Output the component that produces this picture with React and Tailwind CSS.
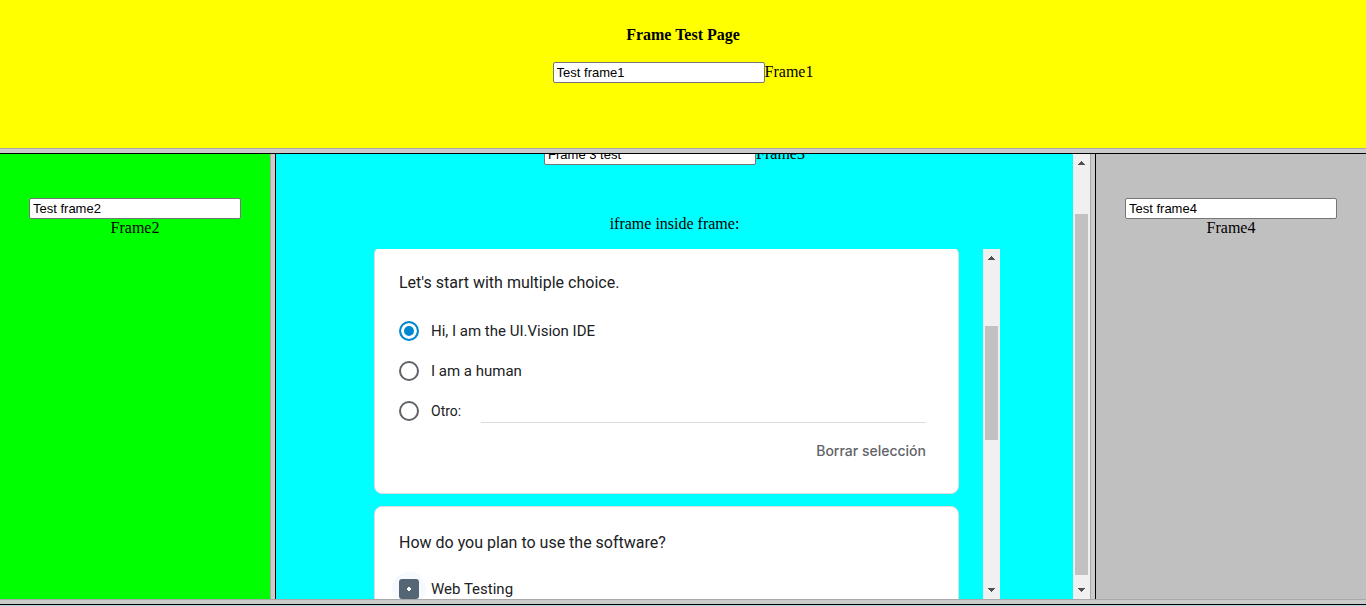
import React from "react";

function Arrow({ down }) {
  return (
    <svg width="7" height="4" viewBox="0 0 7 4" fill="#505050" shapeRendering="crispEdges" aria-hidden="true">
      <path d={down ? "M0 0h7v1H6v1H5v1H4v1H3V3H2V2H1V1H0z" : "M3 0h1v1h1v1h1v1h1v1H0V3h1V2h1V1h1z"} />
    </svg>
  );
}

function ScrollBar({ before, thumb, after }) {
  return (
    <div className="flex w-[17px] shrink-0 flex-col bg-[#f0f0f0]">
      <button type="button" aria-label="Scroll up" className="flex h-[17px] shrink-0 items-center justify-center pt-px">
        <Arrow />
      </button>
      <div className={before} />
      <div className={`mx-0.5 w-[13px] bg-[#c1c1c1] ${thumb}`} />
      <div className={after} />
      <button type="button" aria-label="Scroll down" className="flex h-[17px] shrink-0 items-center justify-center pb-px">
        <Arrow down />
      </button>
    </div>
  );
}

function HorizontalSplitter() {
  return <div className="h-[6px] shrink-0 border-t border-b border-t-[#a9a9a9] border-b-black bg-[#cbcbcb]" />;
}

function VerticalSplitter() {
  return <div className="w-[6px] shrink-0 border-r border-l border-l-[#a9a9a9] border-r-black bg-[#cbcbcb]" />;
}

function FrameField({ id, label, value, stacked }) {
  return (
    <div className={stacked ? "flex flex-col items-center leading-[18px]" : "flex items-start justify-center leading-5"}>
      <input
        id={id}
        type="text"
        defaultValue={value}
        className="h-[21px] w-[212px] rounded-[2px] border border-[#767676] bg-white px-[3px] font-['Liberation_Sans',Arial,sans-serif] text-[13px] leading-4 text-black"
      />
      <label htmlFor={id}>{label}</label>
    </div>
  );
}

function Card({ children }) {
  return <section className="shrink-0 rounded-lg border border-[#dadce0] bg-white pt-6 pr-8 pb-8 pl-6">{children}</section>;
}

const radio =
  "size-5 shrink-0 appearance-none rounded-full border-2 border-[#5f6368] checked:border-[#0288d1] checked:bg-[#0288d1] checked:shadow-[inset_0_0_0_3px_white]";

function Option({ id, label, checked }) {
  return (
    <div className="flex h-10 items-center gap-3">
      <input id={id} type="radio" name="choice" defaultChecked={checked} className={radio} />
      <label htmlFor={id}>{label}</label>
    </div>
  );
}

function EmbeddedForm() {
  return (
    <form className="flex min-h-0 min-w-0 flex-1 flex-col gap-3 overflow-hidden pr-6 pl-[25px] font-[Roboto,sans-serif] text-[15px] leading-5 text-[#202124]">
      <div className="-mt-[3px] shrink-0">
        <Card>
          <h2 className="text-base leading-6">Let's start with multiple choice.</h2>
          <div className="mt-4">
            <Option id="ide" label="Hi, I am the UI.Vision IDE" checked />
            <Option id="human" label="I am a human" />
            <div className="flex h-10 items-center gap-3">
              <input id="other" type="radio" name="choice" className={radio} />
              <label htmlFor="other" className="text-sm">Otro:</label>
              <input
                type="text"
                aria-label="Otro"
                className="ml-2 h-6 min-w-0 flex-1 border-b border-[#dadce0] outline-none"
              />
            </div>
          </div>
          <div className="mt-[10px] flex justify-end">
            <button type="button" className="font-[Inter,sans-serif] text-sm leading-5 font-medium text-[#5f6368]">
              Borrar selección
            </button>
          </div>
        </Card>
      </div>
      <Card>
        <h2 className="text-base leading-6">How do you plan to use the software?</h2>
        <div className="mt-[14px] flex h-10 items-center gap-[5px]">
          <span className="-ml-[7px] flex size-[34px] items-center justify-center rounded-full bg-[#f6faff]">
            <input
              id="web-testing"
              type="checkbox"
              defaultChecked
              className="size-5 appearance-none rounded-[3px] bg-[radial-gradient(circle,white_2px,#546573_2px)]"
            />
          </span>
          <label htmlFor="web-testing">Web Testing</label>
        </div>
      </Card>
    </form>
  );
}

export default function App() {
  return (
    <div className="flex h-screen flex-col overflow-hidden bg-[#add8e6] font-['Liberation_Serif','Times_New_Roman',serif] text-base text-black">
      <header className="h-[148px] shrink-0 bg-[#ffff00] pt-[25px]">
        <h1 className="mb-[17px] text-center leading-5 font-bold">Frame Test Page</h1>
        <FrameField id="frame1" label="Frame1" value="Test frame1" />
      </header>
      <HorizontalSplitter />
      <div className="flex min-h-0 flex-1">
        <aside className="w-[270px] shrink-0 bg-[#00ff00] pt-11">
          <FrameField id="frame2" label="Frame2" value="Test frame2" stacked />
        </aside>
        <VerticalSplitter />
        <main className="flex min-w-0 flex-1 overflow-hidden bg-[#00ffff]">
          <div className="flex min-w-0 flex-1 flex-col">
            <div className="-mt-[10px]">
              <FrameField id="frame3" label="Frame3" value="Frame 3 test" />
            </div>
            <p className="mt-[49px] mb-[15px] text-center leading-5">iframe inside frame:</p>
            <div className="mx-auto flex min-h-0 w-[651px] max-w-full flex-1">
              <EmbeddedForm />
              <ScrollBar before="grow-[60]" thumb="grow-[114]" after="grow-[142]" />
            </div>
          </div>
          <ScrollBar before="grow-[43]" thumb="grow-[361]" after="grow-[7]" />
        </main>
        <VerticalSplitter />
        <aside className="w-[270px] shrink-0 bg-[#c0c0c0] pt-11">
          <FrameField id="frame4" label="Frame4" value="Test frame4" stacked />
        </aside>
      </div>
      <HorizontalSplitter />
      <div className="h-px shrink-0" />
    </div>
  );
}
